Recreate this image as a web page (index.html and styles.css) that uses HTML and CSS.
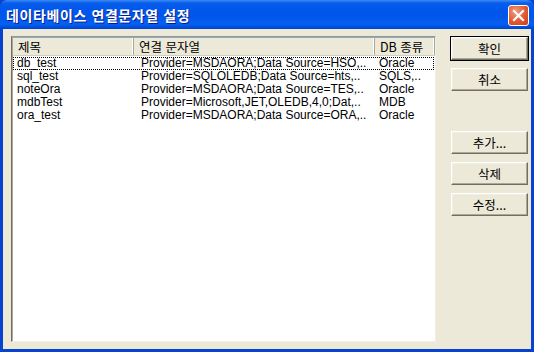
FILE: index.html
```html
<!DOCTYPE html>
<html lang="ko">
<head>
<meta charset="utf-8">
<link rel="stylesheet" href="styles.css">
</head>
<body>
<div class="window">
  <div class="titlebar">
    <span class="title">데이타베이스 연결문자열 설정</span>
    <span class="close"><svg width="13" height="13" viewBox="0 0 13 13"><path d="M2 2 L11 11 M11 2 L2 11" stroke="#fff" stroke-width="2.2" stroke-linecap="square"/></svg></span>
  </div>
  <div class="body">
    <div class="list">
      <div class="header">
        <div class="hcell c1">제목</div>
        <div class="hcell c2">연결 문자열</div>
        <div class="hcell c3">DB 종류</div>
        <div class="hrest"></div>
      </div>
      <div class="rows">
        <div class="row focus"><span class="c1">db_test</span><span class="c2">Provider=MSDAORA;Data Source=HSO,..</span><span class="c3">Oracle</span></div>
        <div class="row"><span class="c1">sql_test</span><span class="c2">Provider=SQLOLEDB;Data Source=hts,..</span><span class="c3">SQLS,..</span></div>
        <div class="row"><span class="c1">noteOra</span><span class="c2">Provider=MSDAORA;Data Source=TES,..</span><span class="c3">Oracle</span></div>
        <div class="row"><span class="c1">mdbTest</span><span class="c2">Provider=Microsoft,JET,OLEDB,4,0;Dat,..</span><span class="c3">MDB</span></div>
        <div class="row"><span class="c1">ora_test</span><span class="c2">Provider=MSDAORA;Data Source=ORA,..</span><span class="c3">Oracle</span></div>
      </div>
    </div>
    <div class="buttons">
      <div class="btn default">확인</div>
      <div class="btn">취소</div>
      <div class="btn gap">추가...</div>
      <div class="btn">삭제</div>
      <div class="btn">수정...</div>
    </div>
  </div>
</div>
</body>
</html>
```
FILE: styles.css
```css
html, body {
  margin: 0;
  padding: 0;
  background: #ECE9D8;
}
.window {
  width: 534px;
  height: 352px;
  display: flex;
  flex-direction: column;
  background: #0842D0;
  box-sizing: border-box;
  font-family: "Liberation Sans", "Noto Sans CJK KR", sans-serif;
  font-size: 12px;
  color: #000;
}
.titlebar {
  height: 29px;
  display: flex;
  align-items: center;
  justify-content: space-between;
  padding: 0 5px 0 6px;
  background: linear-gradient(#3A8CF8 0px, #0A5DE8 3px, #0058EE 8px, #0055EA 16px, #0560F0 24px, #0050E0 27px, #0041C8 29px);
  border-radius: 7px 7px 0 0;
}
.title {
  color: #fff;
  font-family: "Noto Sans CJK KR", sans-serif;
  font-weight: bold;
  font-size: 14px;
  letter-spacing: 0.6px;
  text-shadow: 1px 1px 0 #0A1C8C;
  margin-top: 1px;
}
.close {
  width: 21px;
  height: 21px;
  box-sizing: border-box;
  border: 1px solid #fff;
  border-radius: 3px;
  background: radial-gradient(circle at 35% 30%, #F29C7F 0%, #E0582F 55%, #C8401A 100%);
  display: flex;
  align-items: center;
  justify-content: center;
  margin-top: 2px;
}
.body {
  flex: 1;
  margin: 0 3px 3px 3px;
  background: #ECE9D8;
  display: flex;
  padding: 7px 0 0 8px;
}
.list {
  width: 425px;
  height: 306px;
  box-sizing: border-box;
  background: #fff;
  border-top: 1px solid #7F9DB9;
  border-left: 1px solid #716F64;
  border-right: 1px solid #F1EFE2;
  border-bottom: 1px solid #F1EFE2;
  box-shadow: inset 1px 1px 0 #ACA899;
  display: flex;
  flex-direction: column;
  padding: 1px 0 0 1px;
}
.header {
  display: flex;
  height: 18px;
  background: #ECE9D8;
  border-bottom: 1px solid #D0CDBD;
  box-sizing: border-box;
}
.hcell {
  box-sizing: border-box;
  padding-left: 5px;
  line-height: 17px;
  border-right: 1px solid #ACA899;
  box-shadow: inset -1px 0 0 #fff;
  font-family: "Noto Sans CJK KR", sans-serif;
  font-size: 12.5px;
}
.hrest {
  flex: 1;
}
.header .c1 { width: 121px; }
.header .c2 { width: 241px; }
.header .c3 { width: 60px; }
.rows {
  padding-top: 1px;
}
.row {
  display: flex;
  height: 13px;
  line-height: 13px;
  width: 421px;
  box-sizing: border-box;
  white-space: nowrap;
  font-size: 12px;
}
.row span {
  display: block;
  overflow: hidden;
  padding-left: 3px;
  box-sizing: border-box;
}
.row .c1 { width: 125px; }
.row .c2 { width: 238px; }
.row .c3 { width: 58px; }
.row .c1 { padding-left: 4px; }
.row.focus {
  outline: 1px dotted #000;
  outline-offset: -1px;
}
.buttons {
  display: flex;
  flex-direction: column;
  margin-left: 15px;
  gap: 8px;
}
.btn {
  width: 77px;
  height: 23px;
  box-sizing: border-box;
  border-top: 1px solid #fff;
  border-left: 1px solid #fff;
  border-right: 1px solid #716F64;
  border-bottom: 1px solid #716F64;
  box-shadow: inset -1px -1px 0 #ACA899, inset 1px 1px 0 #F1EFE2;
  background: #ECE9D8;
  display: flex;
  align-items: center;
  justify-content: center;
  font-family: "Noto Sans CJK KR", sans-serif;
  font-size: 12.5px;
}
.btn.default {
  outline: 1px solid #000;
  outline-offset: 0;
  margin-top: 1px;
}
.btn.gap {
  margin-top: 32px;
}
```
